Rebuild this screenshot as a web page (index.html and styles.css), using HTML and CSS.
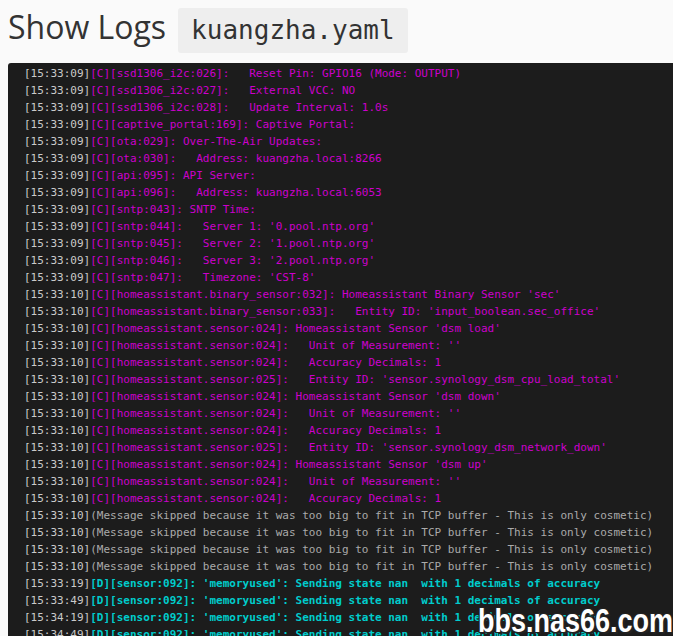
FILE: index.html
```html
<!DOCTYPE html>
<html lang="en">
<head>
  <meta charset="UTF-8" />
  <meta name="viewport" content="width=device-width, initial-scale=1.0" />
  <title>Show Logs</title>
  <link rel="stylesheet" href="styles.css">
</head>
<body>
  <div class="header">
    <h1>Show Logs</h1>
    <code class="file">kuangzha.yaml</code>
  </div>

  <div class="log">
    <div class="line"><span class="ts">[15:33:09]</span><span class="c">[C][ssd1306_i2c:026]:   Reset Pin: GPIO16 (Mode: OUTPUT)</span></div>
    <div class="line"><span class="ts">[15:33:09]</span><span class="c">[C][ssd1306_i2c:027]:   External VCC: NO</span></div>
    <div class="line"><span class="ts">[15:33:09]</span><span class="c">[C][ssd1306_i2c:028]:   Update Interval: 1.0s</span></div>
    <div class="line"><span class="ts">[15:33:09]</span><span class="c">[C][captive_portal:169]: Captive Portal:</span></div>
    <div class="line"><span class="ts">[15:33:09]</span><span class="c">[C][ota:029]: Over-The-Air Updates:</span></div>
    <div class="line"><span class="ts">[15:33:09]</span><span class="c">[C][ota:030]:   Address: kuangzha.local:8266</span></div>
    <div class="line"><span class="ts">[15:33:09]</span><span class="c">[C][api:095]: API Server:</span></div>
    <div class="line"><span class="ts">[15:33:09]</span><span class="c">[C][api:096]:   Address: kuangzha.local:6053</span></div>
    <div class="line"><span class="ts">[15:33:09]</span><span class="c">[C][sntp:043]: SNTP Time:</span></div>
    <div class="line"><span class="ts">[15:33:09]</span><span class="c">[C][sntp:044]:   Server 1: '0.pool.ntp.org'</span></div>
    <div class="line"><span class="ts">[15:33:09]</span><span class="c">[C][sntp:045]:   Server 2: '1.pool.ntp.org'</span></div>
    <div class="line"><span class="ts">[15:33:09]</span><span class="c">[C][sntp:046]:   Server 3: '2.pool.ntp.org'</span></div>
    <div class="line"><span class="ts">[15:33:09]</span><span class="c">[C][sntp:047]:   Timezone: 'CST-8'</span></div>
    <div class="line"><span class="ts">[15:33:10]</span><span class="c">[C][homeassistant.binary_sensor:032]: Homeassistant Binary Sensor 'sec'</span></div>
    <div class="line"><span class="ts">[15:33:10]</span><span class="c">[C][homeassistant.binary_sensor:033]:   Entity ID: 'input_boolean.sec_office'</span></div>
    <div class="line"><span class="ts">[15:33:10]</span><span class="c">[C][homeassistant.sensor:024]: Homeassistant Sensor 'dsm load'</span></div>
    <div class="line"><span class="ts">[15:33:10]</span><span class="c">[C][homeassistant.sensor:024]:   Unit of Measurement: ''</span></div>
    <div class="line"><span class="ts">[15:33:10]</span><span class="c">[C][homeassistant.sensor:024]:   Accuracy Decimals: 1</span></div>
    <div class="line"><span class="ts">[15:33:10]</span><span class="c">[C][homeassistant.sensor:025]:   Entity ID: 'sensor.synology_dsm_cpu_load_total'</span></div>
    <div class="line"><span class="ts">[15:33:10]</span><span class="c">[C][homeassistant.sensor:024]: Homeassistant Sensor 'dsm down'</span></div>
    <div class="line"><span class="ts">[15:33:10]</span><span class="c">[C][homeassistant.sensor:024]:   Unit of Measurement: ''</span></div>
    <div class="line"><span class="ts">[15:33:10]</span><span class="c">[C][homeassistant.sensor:024]:   Accuracy Decimals: 1</span></div>
    <div class="line"><span class="ts">[15:33:10]</span><span class="c">[C][homeassistant.sensor:025]:   Entity ID: 'sensor.synology_dsm_network_down'</span></div>
    <div class="line"><span class="ts">[15:33:10]</span><span class="c">[C][homeassistant.sensor:024]: Homeassistant Sensor 'dsm up'</span></div>
    <div class="line"><span class="ts">[15:33:10]</span><span class="c">[C][homeassistant.sensor:024]:   Unit of Measurement: ''</span></div>
    <div class="line"><span class="ts">[15:33:10]</span><span class="c">[C][homeassistant.sensor:024]:   Accuracy Decimals: 1</span></div>
    <div class="line"><span class="ts">[15:33:10]</span><span class="skip">(Message skipped because it was too big to fit in TCP buffer - This is only cosmetic)</span></div>
    <div class="line"><span class="ts">[15:33:10]</span><span class="skip">(Message skipped because it was too big to fit in TCP buffer - This is only cosmetic)</span></div>
    <div class="line"><span class="ts">[15:33:10]</span><span class="skip">(Message skipped because it was too big to fit in TCP buffer - This is only cosmetic)</span></div>
    <div class="line"><span class="ts">[15:33:10]</span><span class="skip">(Message skipped because it was too big to fit in TCP buffer - This is only cosmetic)</span></div>
    <div class="line"><span class="ts">[15:33:19]</span><span class="d">[D][sensor:092]: 'memoryused': Sending state nan  with 1 decimals of accuracy</span></div>
    <div class="line"><span class="ts">[15:33:49]</span><span class="d">[D][sensor:092]: 'memoryused': Sending state nan  with 1 decimals of accuracy</span></div>
    <div class="line"><span class="ts">[15:34:19]</span><span class="d">[D][sensor:092]: 'memoryused': Sending state nan  with 1 decimals of accuracy</span></div>
    <div class="line"><span class="ts">[15:34:49]</span><span class="d">[D][sensor:092]: 'memoryused': Sending state nan  with 1 decimals of accuracy</span></div>
  </div>

  <div class="watermark">bbs.nas66.com</div>
</body>
</html>
```

FILE: styles.css
```css
html {
  overflow: hidden;
}
body {
  margin: 8px 0 0 8px;
  background-color: #fafafa;
  color: #333;
  font-family: "Open Sans", sans-serif;
  position: relative;
}
.header {
  display: flex;
  align-items: baseline;
  gap: 12px;
}
h1 {
  margin: 0;
  font-size: 32px;
  line-height: 38px;
  font-weight: 400;
  color: #333;
}
.file {
  font-family: "DejaVu Sans Mono", monospace;
  font-size: 26px;
  line-height: 45px;
  padding: 0 13px;
  background-color: #eeeeee;
  border-radius: 3px;
  color: #333;
}
.log {
  margin-top: 10px;
  padding: 2px 16px 0;
  background-color: #1c1c1c;
  border-radius: 3px 0 0 0;
  font-family: "DejaVu Sans Mono", monospace;
  font-size: 11px;
  line-height: 17px;
  overflow: hidden;
}
.line {
  white-space: pre;
}
.ts {
  color: #cacaca;
}
.c {
  color: #cc00cc;
}
.skip {
  color: #aaaaaa;
}
.d {
  color: #00cccc;
  font-weight: bold;
}
.watermark {
  position: absolute;
  top: 598px;
  right: 0;
  font-family: "Liberation Sans", Arial, sans-serif;
  font-weight: bold;
  font-size: 27px;
  color: #fff;
  transform: scaleY(1.2);
  text-shadow: -1px -1px 0 #222, 1px -1px 0 #222, -1px 1px 0 #222, 1px 1px 0 #222, 2px 2px 0 #222;
}
```
